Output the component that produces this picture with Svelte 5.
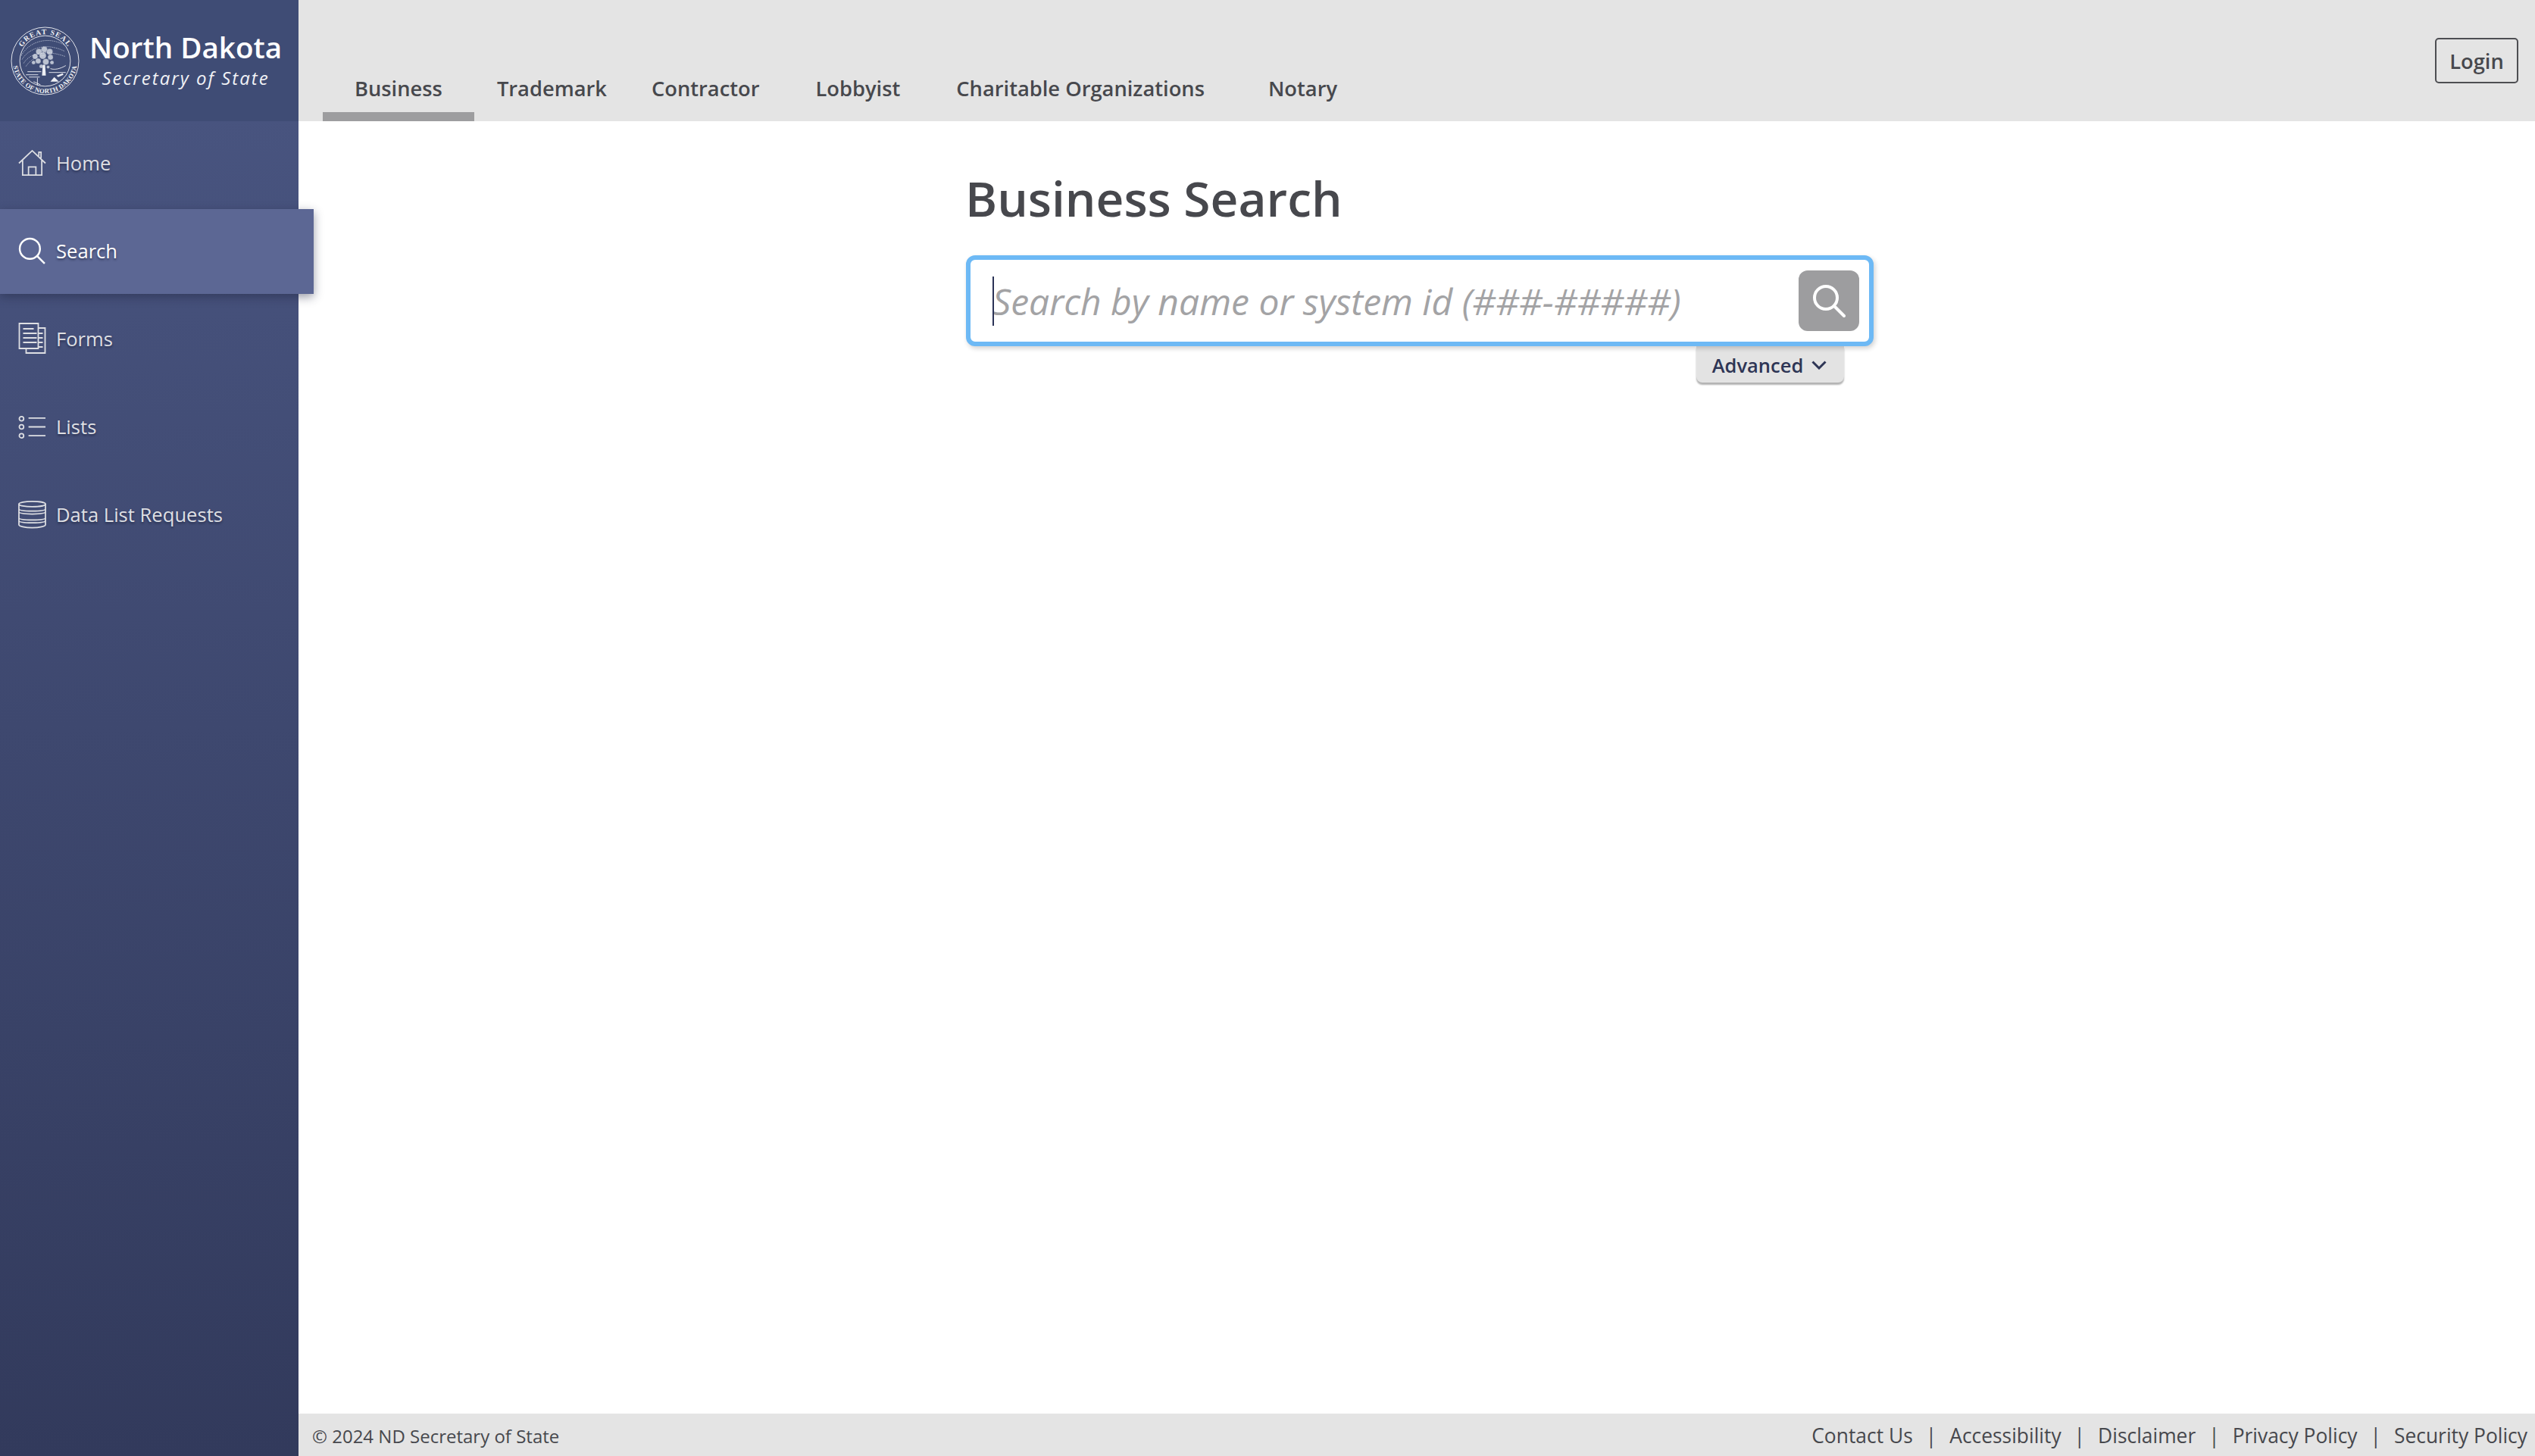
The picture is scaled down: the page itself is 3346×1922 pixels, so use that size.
<script lang="ts">
  const tabs = [
    { label: 'Business', cls: 'business' },
    { label: 'Trademark', cls: 'trademark' },
    { label: 'Contractor', cls: 'contractor' },
    { label: 'Lobbyist', cls: 'lobbyist' },
    { label: 'Charitable Organizations', cls: 'charitable' },
    { label: 'Notary', cls: 'notary' }
  ];
  const footerLinks = ['Contact Us', 'Accessibility', 'Disclaimer', 'Privacy Policy', 'Security Policy'];
  // leaf clusters of the tree on the seal
  const leaves = [
    [44, 30, 4], [37, 33, 4], [51, 33, 4], [32, 39, 3.5], [42, 38, 4.5], [52, 40, 3.5],
    [36, 45, 3.5], [46, 46, 4], [30, 47, 2.5], [54, 47, 2.5], [40, 52, 2.5], [49, 53, 2]
  ];
</script>

<div class="app">
  <aside class="sidebar">
    <div class="brand">
      <svg class="seal" viewBox="0 0 90 90" aria-hidden="true">
        <defs>
          <path id="seal-top" d="M10 45a35 35 0 0 1 70 0" />
          <path id="seal-bottom" d="M3 45a42 42 0 0 0 84 0" />
        </defs>
        <circle cx="45" cy="45" r="44" class="ring" />
        <circle cx="45" cy="45" r="33" class="ring" />
        <text class="seal-text"><textPath href="#seal-top" startOffset="50%" text-anchor="middle">GREAT SEAL</textPath></text>
        <text class="seal-text low"><textPath href="#seal-bottom" startOffset="50%" text-anchor="middle">STATE OF NORTH DAKOTA</textPath></text>
        <g class="rays">
          <path d="M14 38c8-16 32-27 56-14M15 43c8-14 30-23 55-11M17 48c7-12 26-19 54-9M20 52c6-9 16-14 24-14" />
        </g>
        <g class="tree">
          {#each leaves as [cx, cy, r]}
            <circle {cx} {cy} {r} />
          {/each}
          <path d="M42 50h3l1 14h-5z" />
          <path d="M22 59h18M20 63h16M24 66h14M52 55c6 2 13 0 20-4M50 60h22" class="thin" />
          <path d="M52 72l5-6 6 6z" />
          <path d="M60 64l8-3 1 2-7 3z" />
          <path d="M30 72l9 4M35 67v10" class="thin" />
        </g>
      </svg>
      <div class="brand-text">
        <div class="state">North Dakota</div>
        <div class="office">Secretary of State</div>
      </div>
    </div>

    <nav class="side-nav">
      <a class="side-item" href="#home">
        <svg viewBox="0 0 38 36" class="side-icon" aria-hidden="true">
          <path d="M1 18 19 1l18 17M6 14v20h26V14M14 34V23h10v11M28 8V3h3v8" />
        </svg>
        <span>Home</span>
      </a>
      <a class="side-item active" href="#search">
        <svg viewBox="0 0 36 36" class="side-icon" aria-hidden="true">
          <circle cx="15" cy="15" r="13" />
          <path d="M24.500 24.500 34 34" />
        </svg>
        <span>Search</span>
      </a>
      <a class="side-item" href="#forms">
        <svg viewBox="0 0 36 42" class="side-icon tall" aria-hidden="true">
          <path d="M26 1H1v33h25zM26 7h9v33H10v-6M6 8h14M6 14h18M6 20h18M6 26h18M26 14h6M26 20h6M26 26h6M26 32h6" />
        </svg>
        <span>Forms</span>
      </a>
      <a class="side-item" href="#lists">
        <svg viewBox="0 0 38 30" class="side-icon" aria-hidden="true">
          <circle cx="4.500" cy="4" r="3" />
          <circle cx="4.500" cy="15" r="3" />
          <circle cx="4.500" cy="27" r="3" />
          <path d="M14 3h23M14 15h23M14 27h23" />
        </svg>
        <span>Lists</span>
      </a>
      <a class="side-item" href="#data">
        <svg viewBox="0 0 38 38" class="side-icon" aria-hidden="true">
          <ellipse cx="19" cy="4.500" rx="18" ry="3.500" />
          <path d="M1 4.500v28c0 2 8 4 18 4s18-2 18-4v-28M1 11c0 2 8 3 18 3s18-1 18-3M1 15c0 2 8 3 18 3s18-1 18-3M1 23c0 2 8 3 18 3s18-1 18-3M1 27c0 2 8 3 18 3s18-1 18-3" />
        </svg>
        <span>Data List Requests</span>
      </a>
    </nav>
  </aside>

  <div class="main">
    <header class="topbar">
      <nav class="tabs">
        {#each tabs as tab}
          <a class="tab {tab.cls}" href="#{tab.cls}">{tab.label}</a>
        {/each}
      </nav>
      <button type="button" class="login">Login</button>
    </header>

    <main class="content">
      <div class="search-col">
        <h1>Business Search</h1>
        <form class="search-box" onsubmit={(e) => e.preventDefault()}>
          <span class="caret"></span>
          <input type="text" placeholder="Search by name or system id (###-#####)" aria-label="Search" />
          <button type="submit" class="go" aria-label="Search">
            <svg viewBox="0 0 44 44" aria-hidden="true">
              <circle cx="18" cy="18" r="15" />
              <path d="M29 29l13 13" />
            </svg>
          </button>
        </form>
        <div class="advanced-row">
          <button type="button" class="advanced">
            Advanced
            <svg viewBox="0 0 20 12" aria-hidden="true"><path d="M1.500 1.500 10 10l8.500-8.500" /></svg>
          </button>
        </div>
      </div>
    </main>

    <footer class="footer">
      <span>© 2024 ND Secretary of State</span>
      <div class="footer-links">
        {#each footerLinks as link, i}
          {#if i > 0}<span class="sep">|</span>{/if}
          <a href="#{link}">{link}</a>
        {/each}
      </div>
    </footer>
  </div>
</div>

<style>
  :global(body) {
    margin: 0;
    background: #fff;
  }

  .app {
    display: grid;
    grid-template-columns: 394px 1fr;
    height: 100vh;
    font-family: 'Open Sans', sans-serif;
    color: #47484d;
  }

  a {
    color: inherit;
    text-decoration: none;
  }

  .sidebar {
    display: flex;
    flex-direction: column;
    background: linear-gradient(180deg, #4a5682 0%, #323a5c 100%);
    position: relative;
    z-index: 2;
  }

  .brand {
    height: 160px;
    box-sizing: border-box;
    background: #3f4c75;
    display: flex;
    align-items: center;
    padding-left: 14px;
    gap: 13px;
    color: #fff;
    flex: 0 0 auto;
  }
  .seal {
    width: 91px;
    height: 91px;
    flex: 0 0 auto;
  }
  .ring {
    fill: none;
    stroke: #f2f3f6;
    stroke-width: 0.9;
  }
  .seal-text {
    font-family: 'Liberation Serif', serif;
    font-size: 9.500px;
    font-weight: 700;
    fill: #f2f3f6;
    letter-spacing: 1.200px;
  }
  .seal-text.low {
    font-size: 8.500px;
    letter-spacing: 0.300px;
  }
  .rays path {
    fill: none;
    stroke: #cfd4e2;
    stroke-width: 0.7;
    stroke-dasharray: 1.500 1;
  }
  .tree circle {
    fill: #e6e9f0;
    fill-opacity: 0.75;
    stroke: #3f4c75;
    stroke-width: 0.6;
    stroke-dasharray: 1 1;
  }
  .tree path {
    fill: #eef0f5;
  }
  .tree .thin {
    fill: none;
    stroke: #eef0f5;
    stroke-width: 0.9;
  }
  .brand-text {
    display: flex;
    flex-direction: column;
    align-items: center;
    margin-top: -3px;
  }
  .state {
    font-size: 38.600px;
    font-weight: 600;
    line-height: 48px;
    white-space: nowrap;
  }
  .office {
    font-size: 24px;
    font-style: italic;
    letter-spacing: 2px;
    line-height: 33px;
    white-space: nowrap;
    color: #f1f2f6;
  }

  .side-nav {
    display: flex;
    flex-direction: column;
    gap: 4px;
  }
  .side-item {
    height: 112px;
    display: flex;
    align-items: center;
    gap: 13px;
    padding: 0 0 2px 24px;
    box-sizing: border-box;
    color: #dedfe3;
    font-size: 25.600px;
    text-shadow: 0 2px 3px rgba(20, 25, 50, 0.55);
  }
  .side-item.active {
    width: 414px;
    background: #5c6794;
    color: #fff;
    box-shadow: 0 4px 12px rgba(30, 35, 60, 0.45);
  }
  .side-icon {
    width: 37px;
    height: 37px;
    fill: none;
    stroke: currentColor;
    stroke-width: 1.800;
    flex: 0 0 auto;
  }
  .side-icon.tall {
    height: 42px;
  }
  .active .side-icon {
    stroke-width: 2.400;
  }

  .main {
    display: flex;
    flex-direction: column;
    min-width: 0;
  }

  .topbar {
    height: 160px;
    flex: 0 0 auto;
    background: #e4e4e4;
    display: flex;
    justify-content: space-between;
    align-items: flex-start;
    box-sizing: border-box;
    padding: 0 22px 0 32px;
  }
  .tabs {
    display: flex;
    height: 160px;
    align-items: stretch;
  }
  .tab {
    font-size: 27.300px;
    font-weight: 600;
    color: #47484d;
    line-height: 38px;
    padding-top: 98px;
    box-sizing: border-box;
    white-space: nowrap;
  }
  .tab.business {
    padding-left: 42px;
    padding-right: 42px;
    border-bottom: 12px solid #9d9d9f;
  }
  .tab.trademark {
    margin-left: 30px;
  }
  .tab.contractor {
    margin-left: 59px;
  }
  .tab.lobbyist {
    margin-left: 74px;
  }
  .tab.charitable {
    margin-left: 74px;
  }
  .tab.notary {
    margin-left: 84px;
  }

  .login {
    margin-top: 50px;
    width: 110px;
    height: 60px;
    border: 2px solid #4d4e52;
    border-radius: 5px;
    background: transparent;
    font: 600 27.300px 'Open Sans', sans-serif;
    color: #47484d;
    padding: 0;
  }

  .content {
    flex: 1;
    display: flex;
    justify-content: center;
    padding-left: 8px;
  }
  .search-col {
    width: 1198px;
  }
  h1 {
    margin: 0 0 0 -1px;
    padding-top: 56px;
    font-size: 64px;
    line-height: 92px;
    font-weight: 600;
    color: #47484d;
  }
  .search-box {
    margin-top: 29px;
    height: 120px;
    box-sizing: border-box;
    border: 6px solid #6db9f5;
    border-radius: 12px;
    box-shadow: 2px 3px 6px rgba(0, 0, 0, 0.18);
    display: flex;
    align-items: center;
    padding: 0 13px 0 29px;
    position: relative;
    background: #fff;
  }
  .caret {
    position: absolute;
    left: 29px;
    top: 22px;
    width: 2px;
    height: 65px;
    background: #2a3256;
  }
  input {
    flex: 1;
    min-width: 0;
    border: none;
    outline: none;
    background: transparent;
    padding: 0;
    font: italic 400 48px 'Open Sans', sans-serif;
    color: #47484d;
    caret-color: transparent;
  }
  input::placeholder {
    color: #a3a3a5;
    opacity: 1;
  }
  .go {
    width: 80px;
    height: 80px;
    flex: 0 0 auto;
    border: none;
    border-radius: 12px;
    background: #9d9d9f;
    padding: 0;
    display: flex;
    align-items: center;
    justify-content: center;
  }
  .go svg {
    width: 44px;
    height: 44px;
    fill: none;
    stroke: #fff;
    stroke-width: 4;
    stroke-linecap: round;
  }
  .advanced-row {
    display: flex;
    justify-content: flex-end;
    padding-right: 39px;
  }
  .advanced {
    width: 195px;
    height: 48px;
    border: none;
    border-radius: 0 0 8px 8px;
    background: #e3e3e3;
    box-shadow: 0 3px 2px rgba(0, 0, 0, 0.3);
    font: 600 25.500px 'Open Sans', sans-serif;
    color: #2e3555;
    display: flex;
    align-items: center;
    justify-content: center;
    gap: 11px;
    padding: 2px 2px 0 0;
  }
  .advanced svg {
    width: 20px;
    height: 12px;
    fill: none;
    stroke: #2e3555;
    stroke-width: 3;
  }

  .footer {
    height: 56px;
    flex: 0 0 auto;
    background: #e4e4e4;
    display: flex;
    justify-content: space-between;
    align-items: center;
    padding: 2px 10px 0 18px;
    box-sizing: border-box;
    font-size: 24px;
    color: #47484d;
  }
  .footer-links {
    display: flex;
    gap: 17px;
    font-size: 26.400px;
  }
</style>
